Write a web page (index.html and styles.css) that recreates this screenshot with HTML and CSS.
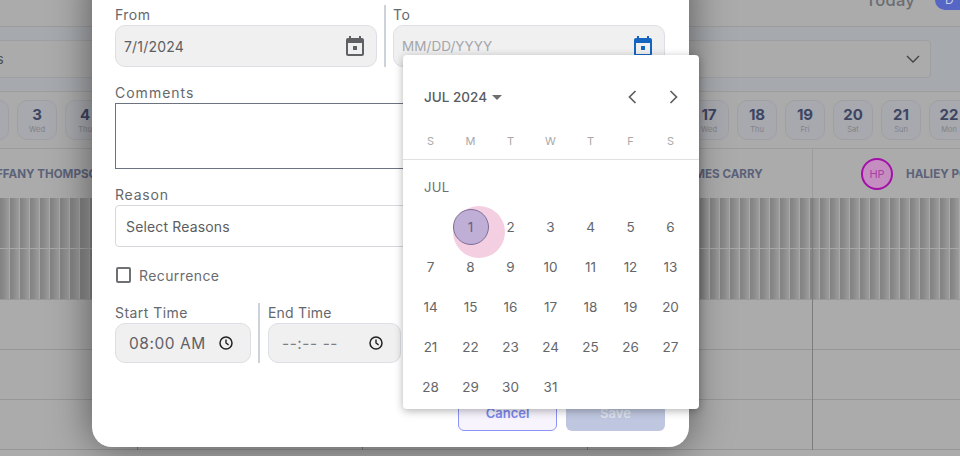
FILE: index.html
```html
<!DOCTYPE html>
<html lang="en">
<head>
<meta charset="utf-8">
<title>Time off</title>
<link rel="stylesheet" href="styles.css">
</head>
<body>
<div class="page">
  <header class="topbar"><span class="today">Today</span><span class="pill">D</span></header>
  <section class="band">
    <div class="filter"><span class="filter-text">Providers</span>
      <svg class="chev" viewBox="0 0 14 8" width="14" height="8"><path d="M1 1l6 6 6-6" fill="none" stroke="#3f4144" stroke-width="1.3"/></svg>
    </div>
  </section>
  <section class="dates">
    <div class="chip"><b>2</b><small>Tue</small></div>
    <div class="chip"><b>3</b><small>Wed</small></div>
    <div class="chip"><b>4</b><small>Thu</small></div>
    <div class="chip"><b>5</b><small>Fri</small></div>
    <div class="chip"><b>6</b><small>Sat</small></div>
    <div class="chip"><b>7</b><small>Sun</small></div>
    <div class="chip"><b>8</b><small>Mon</small></div>
    <div class="chip"><b>9</b><small>Tue</small></div>
    <div class="chip"><b>10</b><small>Wed</small></div>
    <div class="chip"><b>11</b><small>Thu</small></div>
    <div class="chip"><b>12</b><small>Fri</small></div>
    <div class="chip"><b>13</b><small>Sat</small></div>
    <div class="chip"><b>14</b><small>Sun</small></div>
    <div class="chip"><b>15</b><small>Mon</small></div>
    <div class="chip"><b>16</b><small>Tue</small></div>
    <div class="chip"><b>17</b><small>Wed</small></div>
    <div class="chip"><b>18</b><small>Thu</small></div>
    <div class="chip"><b>19</b><small>Fri</small></div>
    <div class="chip"><b>20</b><small>Sat</small></div>
    <div class="chip"><b>21</b><small>Sun</small></div>
    <div class="chip"><b>22</b><small>Mon</small></div>
  </section>
  <section class="people">
    <div class="person person-tiffany"><span class="name">TIFFANY THOMPSON</span></div>
    <div class="person"></div>
    <div class="person"></div>
    <div class="person person-james"><span class="name">JAMES CARRY</span></div>
    <div class="person person-haley"><span class="avatar">HP</span><span class="name">HALIEY POWELL</span></div>
  </section>
  <section class="grid">
    <div class="col"><div class="slot off"></div><div class="slot off"></div><div class="slot"></div><div class="slot"></div><div class="slot"></div></div>
    <div class="col"><div class="slot off"></div><div class="slot off"></div><div class="slot"></div><div class="slot"></div><div class="slot"></div></div>
    <div class="col"><div class="slot off"></div><div class="slot off"></div><div class="slot"></div><div class="slot"></div><div class="slot"></div></div>
    <div class="col"><div class="slot off"></div><div class="slot off"></div><div class="slot"></div><div class="slot"></div><div class="slot"></div></div>
    <div class="col"><div class="slot off"></div><div class="slot off"></div><div class="slot"></div><div class="slot"></div><div class="slot"></div></div>
  </section>

  <div class="modal">
    <div class="row">
      <div class="field field-from">
        <label class="label">From</label>
        <div class="input"><span class="value">7/1/2024</span>
          <svg class="cal" viewBox="0 0 24 24" width="24" height="24"><path fill="#5f6164" d="M19 4h-1V2h-2v2H8V2H6v2H5c-1.1 0-2 .9-2 2v14c0 1.1.9 2 2 2h14c1.1 0 2-.9 2-2V6c0-1.1-.9-2-2-2zm0 16H5V9h14v11zM10 12h4v4h-4z"/></svg>
        </div>
      </div>
      <div class="divider"></div>
      <div class="field field-to">
        <label class="label">To</label>
        <div class="input"><span class="placeholder">MM/DD/YYYY</span>
          <svg class="cal" viewBox="0 0 24 24" width="24" height="24"><path fill="#1565c0" d="M19 4h-1V2h-2v2H8V2H6v2H5c-1.1 0-2 .9-2 2v14c0 1.1.9 2 2 2h14c1.1 0 2-.9 2-2V6c0-1.1-.9-2-2-2zm0 16H5V9h14v11zM10 12h4v4h-4z"/></svg>
        </div>
      </div>
    </div>
    <label class="label label-gap label-wide">Comments</label>
    <div class="textarea"></div>
    <label class="label label-gap label-reason">Reason</label>
    <div class="select"><span>Select Reasons</span></div>
    <div class="check-row"><span class="checkbox"></span><span class="check-label">Recurrence</span></div>
    <div class="row time-row">
      <div class="field field-start">
        <label class="label">Start Time</label>
        <div class="input input-time"><span class="time">08:00 AM</span>
          <svg class="clock" viewBox="0 0 16 16" width="16" height="16"><circle cx="8" cy="8" r="6" fill="none" stroke="#222" stroke-width="1.5"/><path d="M8 4.6V8l2.6 1.8" fill="none" stroke="#222" stroke-width="1.4"/></svg>
        </div>
      </div>
      <div class="divider"></div>
      <div class="field field-end">
        <label class="label label-end">End Time</label>
        <div class="input input-time"><span class="time time-empty">--:-- --</span>
          <svg class="clock" viewBox="0 0 16 16" width="16" height="16"><circle cx="8" cy="8" r="6" fill="none" stroke="#222" stroke-width="1.5"/><path d="M8 4.6V8l2.6 1.8" fill="none" stroke="#222" stroke-width="1.4"/></svg>
        </div>
      </div>
    </div>
    <div class="actions">
      <button class="btn btn-cancel">Cancel</button>
      <button class="btn btn-save">Save</button>
    </div>
  </div>

  <div class="picker">
    <div class="picker-head">
      <span class="month">JUL 2024</span><span class="caret"></span>
      <span class="nav">
        <svg viewBox="0 0 10 16" width="10" height="16"><path d="M8.5 2L2.5 8l6 6" fill="none" stroke="#5f5f5f" stroke-width="1.7"/></svg>
        <svg viewBox="0 0 10 16" width="10" height="16"><path d="M1.5 2l6 6-6 6" fill="none" stroke="#5f5f5f" stroke-width="1.7"/></svg>
      </span>
    </div>
    <div class="weekdays"><span>S</span><span>M</span><span>T</span><span>W</span><span>T</span><span>F</span><span>S</span></div>
    <div class="month-label">JUL</div>
    <div class="days">
      <span></span>
      <span class="day-selected"><i class="ripple"></i><i class="dot"></i><em>1</em></span>
      <span>2</span><span>3</span><span>4</span><span>5</span><span>6</span>
      <span>7</span><span>8</span><span>9</span><span>10</span><span>11</span><span>12</span><span>13</span>
      <span>14</span><span>15</span><span>16</span><span>17</span><span>18</span><span>19</span><span>20</span>
      <span>21</span><span>22</span><span>23</span><span>24</span><span>25</span><span>26</span><span>27</span>
      <span>28</span><span>29</span><span>30</span><span>31</span>
    </div>
  </div>
</div>
</body>
</html>
```
FILE: styles.css
```css
* { box-sizing: border-box; }
html, body { margin: 0; padding: 0; }
body { font-family: Inter, "Liberation Sans", sans-serif; background: #ababab; }
.page { position: relative; width: 960px; height: 456px; overflow: hidden; background: #ababab; }

.topbar { height: 27px; display: flex; justify-content: flex-end; align-items: flex-start; border-bottom: 1px solid #9c9c9c; margin-right: -25px; }
.today { font-size: 16.5px; line-height: 20px; margin-top: -10px; color: #6a6d72; font-weight: 500; margin-right: 20px; letter-spacing: .25px; }
.pill { width: 50px; height: 20px; margin-top: -10px; border-radius: 10px; background: #5566c4; color: #c8cde8; font-size: 12px; line-height: 20px; padding-left: 10px; }

.band { height: 65px; padding: 13px 29px 13px 0; background: #a6a9ad; border-bottom: 1px solid #9c9c9c; }
.filter { height: 38px; margin-left: -60px; display: flex; align-items: center; justify-content: space-between; border: 1px solid #9d9fa2; border-radius: 4px; background: #ababab; padding: 0 10px 0 0; }
.filter-text { font-size: 13.5px; color: #4e5054; margin-left: 2px; }
.chev { display: block; }

.dates { height: 57px; display: flex; gap: 8px; align-items: center; margin-left: -31px; margin-right: -40px; border-bottom: 1px solid #9c9c9c; }
.chip { flex: 0 0 40px; height: 40px; border: 1px solid #9fa0a3; border-radius: 10px; background: #a7a9ae; display: flex; flex-direction: column; align-items: center; padding-top: 5px; }
.chip b { font-size: 15px; line-height: 18px; font-weight: 700; color: #3d4563; }
.chip small { font-size: 7.5px; line-height: 11px; color: #7f8288; }

.people { height: 49px; display: flex; margin-left: -87px; }
.person { flex: 0 0 225px; display: flex; align-items: center; border-right: 1px solid #9c9c9c; white-space: nowrap; overflow: hidden; }
.person-tiffany { padding-left: 72px; }
.person-james { padding-left: 91px; }
.person-haley { padding-left: 48px; border-right: 0; }
.name { font-size: 11.6px; font-weight: 700; color: #5b6279; }
.avatar { flex: 0 0 32px; height: 32px; border-radius: 50%; border: 2px solid #a40fa8; background: #c48fc0; color: #ad3fa5; font-size: 11px; display: flex; align-items: center; justify-content: center; margin-right: 13px; }

.grid { display: flex; margin-left: -87px; }
.col { flex: 0 0 225px; border-right: 1px solid #7c7c7c; }
.slot { height: 50px; border-bottom: 1px solid #979797; }
.slot.off { height: 51px; border-bottom: 1px solid #a8a8a8; background: repeating-linear-gradient(90deg, #a8a8a8 0 1px, #828282 1px, #888888 4px, #999999 9px, #9c9c9c 10px); background-attachment: fixed; background-position: -1px 0; }
.slot.off:nth-child(2) { border-bottom-color: #999; }

.modal { position: absolute; left: 92px; top: -40px; width: 597px; height: 487px; background: #fff; border-radius: 20px; padding: 45px 24px 16px 23px; box-shadow: 0 0 40px rgba(0,0,0,.5); color: #5a5c60; }
.row { display: flex; }
.field { display: flex; flex-direction: column; }
.field-from { width: 262px; }
.field-to { width: 272px; }
.field-start { width: 136px; }
.field-end { width: 133px; }
.divider { width: 2px; background: #cdd2da; margin: 0 7px; }
.label { display: block; font-size: 14px; line-height: 20px; color: #65686c; letter-spacing: .45px; }
.label-gap { margin-top: 16px; }
.label-wide { letter-spacing: 1px; }
.label-reason { letter-spacing: .8px; }
.label-end { letter-spacing: .2px; }
.input { height: 42px; border: 1px solid #dcdfe3; border-radius: 10px; background: #f0f0f1; display: flex; align-items: center; justify-content: space-between; padding: 0 9px 0 8px; font-size: 14px; }
.value { color: #5c5e61; letter-spacing: .2px; }
.placeholder { color: #a4a6a9; letter-spacing: .05px; font-size: 13.5px; }
.cal { display: block; }
.textarea { height: 66px; border: 1px solid #6b7280; border-left-width: 1.5px; background: #fff; }
.select { height: 42px; border: 1px solid #d5d8dc; border-radius: 4px; display: flex; align-items: center; padding-left: 10px; font-size: 14px; color: #5c5e61; letter-spacing: .15px; }
.check-row { margin-top: 18px; height: 20px; display: flex; align-items: center; padding-left: 1px; }
.checkbox { width: 15px; height: 16px; border: 2px solid #6e7074; border-radius: 2px; }
.check-label { margin-left: 8px; font-size: 14px; color: #6a6c70; letter-spacing: .4px; }
.time-row { margin-top: 18px; }
.time-row .divider { margin: 0 8px 0 7px; }
.input-time { height: 40px; padding: 0 16px 0 13px; }
.time { font-size: 15.5px; color: #5f6165; letter-spacing: .55px; white-space: nowrap; }
.time-empty { color: #7c7e82; }
.clock { display: block; flex: none; }
.actions { margin-top: 32px; display: flex; justify-content: flex-end; gap: 9px; }
.btn { width: 99px; height: 36px; border-radius: 6px; font: 600 13px Inter, "Liberation Sans", sans-serif; padding: 0; }
.btn-cancel { background: #f7f4fe; border: 1px solid #8b94fb; color: #7b86ee; }
.btn-save { background: #bfc7e0; border: 0; color: #dfe3ef; }

.picker { position: absolute; left: 403px; top: 55px; width: 296px; height: 354px; background: #fff; border-radius: 4px; box-shadow: 0 2px 8px rgba(0,0,0,.3); }
.picker-head { height: 84px; display: flex; align-items: center; padding: 0 20px 0 21px; }
.month { font-size: 13.5px; font-weight: 500; color: #5a5c5f; }
.caret { width: 0; height: 0; border-left: 5px solid transparent; border-right: 5px solid transparent; border-top: 5px solid #6e6e6e; margin-left: 5px; }
.nav { margin-left: auto; display: flex; gap: 30px; }
.nav svg { display: block; }
.nav svg:first-child { margin-right: 2px; }
.weekdays { height: 21px; display: grid; grid-template-columns: repeat(7, 40px); padding-left: 7.5px; border-bottom: 1px solid #e0e0e0; }
.weekdays span { text-align: center; font-size: 11px; line-height: 5px; color: #a8a8a8; }
.month-label { height: 47px; padding: 17px 0 0 21px; font-size: 13px; line-height: 20px; color: #6c6e72; letter-spacing: .3px; }
.days { display: grid; grid-template-columns: repeat(7, 40px); grid-auto-rows: 40px; padding-left: 7.5px; }
.days span { position: relative; display: flex; align-items: center; justify-content: center; font-size: 13.5px; color: #646669; }
.day-selected em { position: relative; font-style: normal; color: #6a5f80; }
.ripple { position: absolute; left: 2.5px; top: -1px; width: 52px; height: 52px; border-radius: 50%; background: #f4cfe2; }
.dot { position: absolute; left: 2.5px; top: 2px; width: 36px; height: 36px; border-radius: 50%; background: #bfaed6; border: 1px solid #7f6d98; }
```
